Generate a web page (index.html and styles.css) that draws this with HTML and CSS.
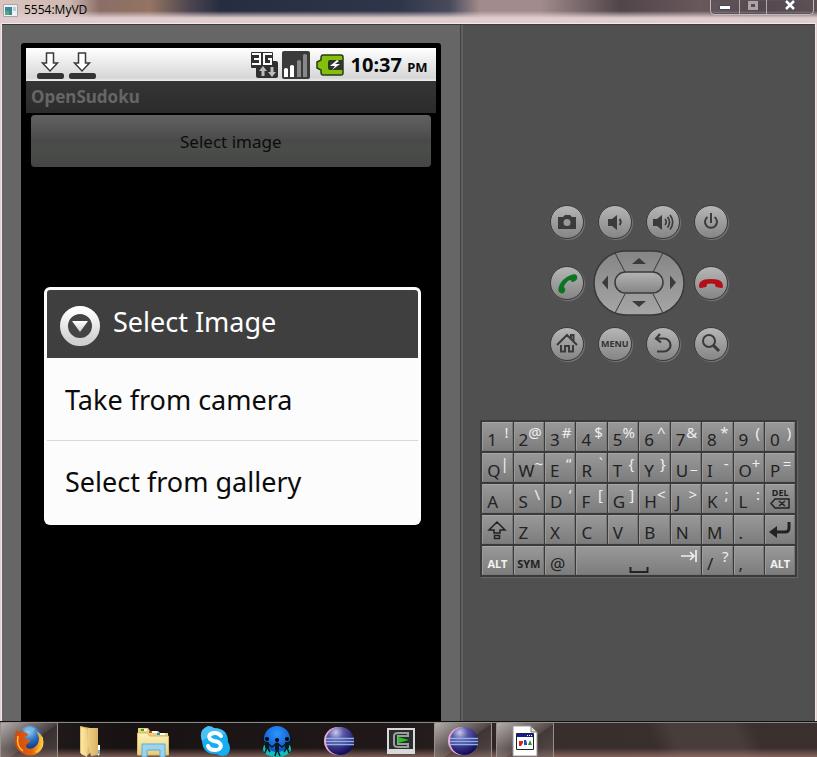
FILE: index.html
```html
<!DOCTYPE html>
<html lang="en">
<head>
<meta charset="utf-8">
<title>5554:MyVD</title>
<link rel="stylesheet" href="styles.css">
</head>
<body>
<svg class="defs" width="0" height="0" aria-hidden="true">
  <defs>
    <linearGradient id="pad" x1="0" y1="0" x2="0" y2="1"><stop offset="0" stop-color="#858585"/><stop offset="1" stop-color="#a6a6a6"/></linearGradient>
    <linearGradient id="center" x1="0" y1="0" x2="0" y2="1"><stop offset="0" stop-color="#b4b4b4"/><stop offset="1" stop-color="#858585"/></linearGradient>
    <linearGradient id="ring" x1="0" y1="0" x2="0" y2="1"><stop offset="0" stop-color="#fff"/><stop offset="1" stop-color="#cfcfcf"/></linearGradient>
    <linearGradient id="folder" x1="0" y1="0" x2="1" y2="0"><stop offset="0" stop-color="#fbe7a3"/><stop offset="1" stop-color="#d9b263"/></linearGradient>
    <linearGradient id="files" x1="0" y1="0" x2="0" y2="1"><stop offset="0" stop-color="#fdf3bd"/><stop offset="1" stop-color="#e8cd78"/></linearGradient>
    <linearGradient id="fox" x1="0" y1="0" x2="1" y2="0"><stop offset="0" stop-color="#d2460f"/><stop offset=".6" stop-color="#e0650f"/><stop offset="1" stop-color="#ffd34a"/></linearGradient>
    <radialGradient id="globe" cx=".45" cy=".2" r=".8"><stop offset="0" stop-color="#9fd8f5"/><stop offset=".45" stop-color="#2b72c0"/><stop offset="1" stop-color="#0b1f66"/></radialGradient>
    <radialGradient id="eclipse" cx=".35" cy=".2" r=".8"><stop offset="0" stop-color="#c9c9ee"/><stop offset=".35" stop-color="#5b58a8"/><stop offset="1" stop-color="#120b5c"/></radialGradient>
    <radialGradient id="world" cx=".5" cy=".3" r=".7"><stop offset="0" stop-color="#2f95ff"/><stop offset="1" stop-color="#0950c4"/></radialGradient>
  </defs>
</svg>

<header class="titlebar">
  <svg class="app-icon" width="15" height="13" viewBox="0 0 15 13"><path fill="#eef1f2" stroke="#a8a6a8" d="M.5.5h14v12H.5z"/><path fill="#3c8793" d="M2 3h7v8H2z"/><path fill="#57a87d" d="M2 7h4v4H2z"/><path fill="#b8cfe0" d="M10 3h3v4h-3z"/></svg>
  <h1 class="window-title">5554:MyVD</h1>
  <div class="window-buttons">
    <button class="wb wb-min" aria-label="Minimize"><svg width="12" height="5" viewBox="0 0 12 5"><path fill="#fff" stroke="#4b4a60" d="M.5.5h11v4H.5z"/></svg></button>
    <button class="wb wb-max" aria-label="Maximize"><svg width="10" height="9" viewBox="0 0 10 9"><path fill="none" stroke="#aaa4a8" stroke-width="3" d="M1.500 1.500h7v6h-7z"/></svg></button>
    <button class="wb wb-close" aria-label="Close"><svg width="12" height="11" viewBox="0 0 12 11"><path stroke="#4b4a60" stroke-width="4" d="m2 1 8 8M10 1 2 9"/><path stroke="#fff" stroke-width="2.500" d="m2 1 8 8M10 1 2 9"/></svg></button>
  </div>
</header>

<main class="emulator">
  <section class="device">
    <div class="bezel">
      <div class="status">
        <svg width="28" height="30" viewBox="0 0 28 30"><path fill="#fff" stroke="#3a3a3a" stroke-width="1.500" d="M10.500 3h7v10h4L14 21l-7.500-8h4z"/><rect x="1" y="23" width="27" height="6" rx="2.500" fill="#333"/></svg>
        <svg width="28" height="30" viewBox="0 0 28 30"><path fill="#fff" stroke="#3a3a3a" stroke-width="1.500" d="M10.500 3h7v10h4L14 21l-7.500-8h4z"/><rect x="1" y="23" width="27" height="6" rx="2.500" fill="#333"/></svg>
        <span class="grow"></span>
        <svg width="28" height="28" viewBox="0 0 28 28"><path fill="#303030" d="M2 1h20q1 0 1 1v8h3q2 0 2 2v13q0 2-2 2H8q-2 0-2-2v-8H2q-1 0-1-1V2q0-1 1-1z"/><path fill="none" stroke="#fff" stroke-width="2" d="M2 3h8v10H2M4 8h6M22 3h-8v10h7V8h-3"/><path fill="#bbb" d="m13 15 4 5h-2.500v5h-3v-5H9zM22 26l4-5h-2.500v-5h-3v5H18z"/></svg>
        <svg width="28" height="28" viewBox="0 0 28 28"><rect width="28" height="28" rx="2" fill="#3a3a3a"/><path fill="#fff" d="M2 18q2-2 4 0v8H2zM8 15q2-2 4 0v11H8z"/><path fill="#888" d="M15 10q2-2 4 0v16h-4zM21 4q2-2 4 0v22h-4z"/></svg>
        <svg class="battery" width="28" height="22" viewBox="0 0 28 22"><path fill="#83c00c" stroke="#2d3a18" stroke-width="1.500" d="M7 1h18q2 0 2 2v16q0 2-2 2H7q-2 0-2-3v-2l-4-2V8l4-2V4q0-3 2-3z"/><path fill="#2f352a" d="M14 6h13v10H14q-2 0-2-2V8q0-2 2-2z"/><path fill="#fff" d="m21 6-7 6 5 0-3 4 8-6h-5l4-3z"/></svg>
        <span class="clock">10:37 <small>PM</small></span>
      </div>
      <h2 class="app-title">OpenSudoku</h2>
      <button class="select-image">Select image</button>
      <div class="dialog" role="dialog" aria-labelledby="dialog-title">
        <div class="dialog-head">
          <svg width="40" height="40" viewBox="0 0 40 40"><circle cx="20" cy="20" r="16" fill="#444" stroke="url(#ring)" stroke-width="8"/><path fill="url(#ring)" d="M12 15h16l-8 11z"/></svg>
          <h3 id="dialog-title">Select Image</h3>
        </div>
        <button class="option">Take from camera</button>
        <button class="option">Select from gallery</button>
      </div>
    </div>
  </section>

  <section class="controls">
    <div class="pad">
      <button class="round" aria-label="Camera"><svg width="32" height="32" viewBox="0 0 32 32"><path fill="#3b3b3b" d="M7 11h5l2-2h5l2 2h4v12H7z"/><circle cx="16" cy="16.500" r="3.500" fill="#999"/></svg></button>
      <button class="round" aria-label="Volume down"><svg width="32" height="32" viewBox="0 0 32 32"><path fill="#3b3b3b" d="M9 13h4l5-4v15l-5-4H9z"/><path fill="none" stroke="#3b3b3b" stroke-width="2" d="M20.500 13q2.500 3 0 6"/></svg></button>
      <button class="round" aria-label="Volume up"><svg width="32" height="32" viewBox="0 0 32 32"><path fill="#3b3b3b" d="M6 13h4l5-4v15l-5-4H6z"/><path fill="none" stroke="#3b3b3b" stroke-width="1.700" d="M18 13q2.500 3 0 6M20.500 11q4 5 0 10.500M23 9q5.500 7 0 14.500"/></svg></button>
      <button class="round" aria-label="Power"><svg width="32" height="32" viewBox="0 0 32 32"><path fill="none" stroke="#3b3b3b" stroke-width="2" d="M12.500 11a6 6 0 1 0 7 0M16 7v10"/></svg></button>
      <button class="round" aria-label="Call"><svg width="32" height="32" viewBox="0 0 32 32"><path fill="#08751f" d="M8 25c-2-3 1-13 12-17 3-1 5-1 6 1 1 3-1 5-4 6-2 0-2-2-3-2-3 1-6 5-6 7 0 1 2 1 1 4-1 3-4 3-6 1z"/></svg></button>
      <div class="dpad">
        <svg width="92" height="66" viewBox="0 0 92 66"><rect x="1" y="1" width="90" height="64" rx="32" fill="url(#pad)" stroke="#393939" stroke-width="1.500"/><path fill="none" stroke="#393939" d="M22 3l10 19M70 3 60 22M22 63l10-19M70 63 60 44"/><rect x="22" y="22" width="48" height="21" rx="10.500" fill="url(#center)" stroke="#3b3b3b" stroke-width="1.500"/><path fill="#3b3b3b" d="m46 8 7 6H39zM46 57l7-6H39zM9 32.500l6-7v14zM83 32.500l-6-7v14z"/></svg>
      </div>
      <button class="round" aria-label="End call"><svg width="32" height="32" viewBox="0 0 32 32"><path fill="#b30f18" d="M4 20c0-5 2-8 12-8s12 3 12 8q0 1-2 1l-5-1q-1-1-1-3-4-1-8 0 0 2-1 3l-5 1q-2 0-2-1z"/></svg></button>
      <button class="round" aria-label="Home"><svg width="32" height="32" viewBox="0 0 32 32"><path fill="none" stroke="#3b3b3b" stroke-width="2" d="m6 17 10-10 10 10M20 10V7h2.500v6M10 17v6.500h4V18h4v5.500h4V17"/></svg></button>
      <button class="round menu">MENU</button>
      <button class="round" aria-label="Back"><svg width="32" height="32" viewBox="0 0 32 32"><path fill="none" stroke="#3b3b3b" stroke-width="2.200" d="M13 6 9 10.500l5 4M9 10.500h8a6.500 6.500 0 0 1 0 13h-7"/></svg></button>
      <button class="round" aria-label="Search"><svg width="32" height="32" viewBox="0 0 32 32"><circle cx="14" cy="13" r="6" fill="none" stroke="#3b3b3b" stroke-width="2"/><path stroke="#3b3b3b" stroke-width="3" d="m18 17 6 6"/></svg></button>
    </div>

    <div class="keyboard">
      <button class="key">1<sup>!</sup></button><button class="key">2<sup>@</sup></button><button class="key">3<sup>#</sup></button><button class="key">4<sup>$</sup></button><button class="key">5<sup>%</sup></button><button class="key">6<sup>^</sup></button><button class="key">7<sup>&amp;</sup></button><button class="key">8<sup>*</sup></button><button class="key">9<sup>(</sup></button><button class="key">0<sup>)</sup></button>
      <button class="key">Q<sup>|</sup></button><button class="key">W<sup>~</sup></button><button class="key">E<sup>“</sup></button><button class="key">R<sup>`</sup></button><button class="key">T<sup>{</sup></button><button class="key">Y<sup>}</sup></button><button class="key">U<sup>_</sup></button><button class="key">I<sup>-</sup></button><button class="key">O<sup>+</sup></button><button class="key">P<sup>=</sup></button>
      <button class="key">A</button><button class="key">S<sup>\</sup></button><button class="key">D<sup>‘</sup></button><button class="key">F<sup>[</sup></button><button class="key">G<sup>]</sup></button><button class="key">H<sup>&lt;</sup></button><button class="key">J<sup>&gt;</sup></button><button class="key">K<sup>;</sup></button><button class="key">L<sup>:</sup></button>
      <button class="key del">DEL<svg width="20" height="11" viewBox="0 0 20 11"><path fill="none" stroke="#222" stroke-width="1.500" d="M1 5.500 5 1h14v9H5zM9 3l6 5M15 3 9 8"/></svg></button>
      <button class="key icon" aria-label="Shift"><svg width="20" height="20" viewBox="0 0 20 20"><path fill="none" stroke="#222" stroke-width="1.500" d="m10 2 8 8h-5v3H7v-3H2zM7.500 15.500h5v3h-5z"/></svg></button>
      <button class="key">Z</button><button class="key">X</button><button class="key">C</button><button class="key">V</button><button class="key">B</button><button class="key">N</button><button class="key">M</button><button class="key">.</button>
      <button class="key icon" aria-label="Enter"><svg width="24" height="18" viewBox="0 0 24 18"><path fill="none" stroke="#222" stroke-width="3" d="M21 1v6q0 4-4 4H8"/><path fill="#222" d="M1 11 9 5v12z"/></svg></button>
      <button class="key word light">ALT</button><button class="key word">SYM</button><button class="key">@</button>
      <button class="key space" aria-label="Space"><svg width="20" height="7" viewBox="0 0 20 7"><path fill="none" stroke="#222" stroke-width="2" d="M1.500 0v5h17V0"/></svg><svg class="tab" width="16" height="12" viewBox="0 0 16 12"><path fill="none" stroke="#eee" stroke-width="1.700" d="M0 6h13M9 2l4 4-4 4M15 0v12"/></svg></button>
      <button class="key">/<sup>?</sup></button><button class="key">,</button><button class="key word light">ALT</button>
    </div>
  </section>
</main>

<nav class="taskbar" aria-label="Taskbar">
  <button class="task active" aria-label="Firefox"><svg width="32" height="32" viewBox="0 0 32 32"><circle cx="17" cy="14" r="13" fill="url(#globe)"/><path fill="#75b9e4" d="M14 4q4-3 8 0l-3 3-4-1z"/><path fill="url(#fox)" d="M3 5q2 1 4 3l2-4q1 3 4 4 2 0 2 2l-3 2 1 2q3 0 5 2-2 1-4 3-2 2 0 4 5 2 9-2 3-3 3-8-1-4-3-7 5 2 7 8 2 9-5 14-8 5-16 0Q1 23 2 15q0-6 1-10z"/><path fill="none" stroke="#ffc637" stroke-width="1.500" d="M29 12q2 10-6 15M5 11q-2 10 5 15"/></svg></button>
  <button class="task" aria-label="Folder"><svg width="32" height="32" viewBox="0 0 32 32"><path fill="#e2bc65" d="M5 1l10 2v25l-3 3-7-3z"/><path fill="url(#folder)" d="M13 3h10v27l-7 1-3-11-1 12-6-3V2l6 2v14z"/><path fill="#fff" d="M23 20h2v9l-2 2z"/><path fill="#69b0d8" d="M23 25h2v4h-2z"/></svg></button>
  <button class="task" aria-label="Windows Explorer"><svg width="34" height="32" viewBox="0 0 34 32"><path fill="#e9d07d" d="M2 3h10l2 3h8l2 2h8v22H2z"/><path fill="#fff" d="M5 4h6v2H5zM13 6h8v2h-8zM21 8h8v2h-8z"/><path fill="#25ab2d" d="M5 4h3v2H5z"/><path fill="#dc3e25" d="M13 6h3v2h-3z"/><path fill="#258de0" d="M21 8h3v2h-3z"/><path fill="url(#files)" stroke="#d8b965" d="M1.500 8h10l2 3h19v19h-31z"/><path fill="#9cd4ee" stroke="#5dacd5" d="M6 32V19h23v13h-5v-7H11v7z"/></svg></button>
  <button class="task" aria-label="Skype"><svg width="32" height="32" viewBox="0 0 32 32"><path fill="#15aef0" d="M9 1q4 0 6 2 14 0 14 14 2 3 2 6 0 7-7 8-4 0-6-2Q4 30 3 16-1 5 9 1z"/><path fill="#7fd3f8" opacity=".5" d="M9 1q4 0 6 2 8 0 12 6Q13 8 3 16-1 5 9 1z"/><path fill="none" stroke="#fff" stroke-width="4" stroke-linecap="round" d="M22 11q-2-3-6-3c-7 0-8 6-1 8 9 1 9 9 1 9-4 0-6-1-7-4"/></svg></button>
  <button class="task" aria-label="Community"><svg width="32" height="32" viewBox="0 0 32 32"><ellipse cx="16" cy="24" rx="14" ry="8" fill="#12bfbb"/><circle cx="16" cy="14" r="13" fill="url(#world)"/><path stroke="#061a22" stroke-width="1.500" fill="none" d="M1 11v5l5 2 5 4 5-4 5 4 5-4 5-2v-5M6 22l-2 6M6 22l3 5M26 22l-3 5M26 22l2 6M16 24l-2 7M16 24l3 7"/><path stroke="#061a22" stroke-width="4" d="M6 17v6M16 18v7M26 17v6"/><circle cx="6" cy="14" r="2"/><circle cx="16" cy="15" r="2"/><circle cx="26" cy="14" r="2"/></svg></button>
  <button class="task" aria-label="Eclipse"><svg width="32" height="32" viewBox="0 0 32 32"><circle cx="15" cy="16" r="14" fill="#efa9d8"/><circle cx="17" cy="16" r="14" fill="url(#eclipse)"/><path stroke="#8fb2e2" stroke-width="1.300" d="M3 13.500h28M3 16.500h28M3 19.500h28"/></svg></button>
  <button class="task" aria-label="Console"><svg width="30" height="30" viewBox="0 0 30 30"><path fill="#d8dada" d="M1 3h28v26H1z"/><path fill="#292d2c" d="M3 5h24v19H3z"/><path fill="none" stroke="#9a9f9e" stroke-width="2" d="M22 8H12q-4 0-4 3v8q0 3 4 3h10v-3H12v-8h10z"/><path fill="#20c61e" d="m12 12 11 3-11 3z"/></svg></button>
  <button class="task active" aria-label="Eclipse workspace"><svg width="32" height="32" viewBox="0 0 32 32"><circle cx="15" cy="16" r="14" fill="#efa9d8"/><circle cx="17" cy="16" r="14" fill="url(#eclipse)"/><path stroke="#8fb2e2" stroke-width="1.300" d="M3 13.500h28M3 16.500h28M3 19.500h28"/></svg></button>
  <button class="task active" aria-label="Emulator"><svg width="26" height="32" viewBox="0 0 26 32"><path fill="#fff" stroke="#999" d="M1 1h18l6 6v24H1z"/><path fill="#ddd" stroke="#777" d="M19 1v6h6z"/><path fill="#fff" stroke="#222" d="M4.500 8.500h17v16h-17z"/><path fill="#141d96" d="M5 9h16v3H5z"/><path fill="#fff" d="M15 10h1v1h-1zM17 10h1v1h-1zM19 10h1v1h-1z"/><path fill="#d52525" d="M7 16h4v2l-2 3H7z"/><path fill="#244bc5" d="M12 15h2l1 3v2h-3z"/><path fill="#26913b" d="m18 15 2 5h-4z"/></svg></button>
</nav>
</body>
</html>
```
FILE: styles.css
```css
* { box-sizing: border-box; }
.defs { position: absolute; }
body {
  margin: 0;
  height: 100vh;
  display: flex;
  flex-direction: column;
  overflow: hidden;
  background: #e3d1d2;
  font-family: "Noto Sans", "Open Sans", sans-serif;
}
h1, h2, h3 { margin: 0; font-weight: 400; }
button { margin: 0; padding: 0; border: 0; font-family: inherit; color: inherit; background: none; }
svg { display: block; flex: none; }

/* Window frame */
.titlebar {
  flex: none;
  height: 24px;
  display: flex;
  align-items: flex-start;
  padding: 0 3px;
  background:
    linear-gradient(transparent 11px, #dfcdd0 18px),
    linear-gradient(90deg, #d9c4bf 0, #cdb8b2 70px, #8a6e66 100px, #947462 150px, #4c4550 190px, #272d40 220px, #30364a 400px, #494b5c 450px, #a28c8b 480px, #a28c8b 540px, #50454a 620px, #69585c 700px, #53494f 760px, #5e5053 100%);
}
.app-icon { margin-top: 4px; }
.window-title { margin-left: 6px; font: 12px/19px "Open Sans", sans-serif; color: #000; }
.window-buttons {
  display: flex;
  margin-left: auto;
  height: 15px;
  border: 1px solid #c3b8bb;
  border-top: 0;
  border-radius: 0 0 5px 5px;
  box-shadow: inset 0 0 0 1px #5a5256;
}
.wb { display: flex; justify-content: center; align-items: flex-start; width: 27px; }
.wb + .wb { border-left: 1px solid #b3a9ac; }
.wb-min { width: 28px; }
.wb-min svg { margin-top: 5px; }
.wb-max svg { margin-top: 1px; }
.wb-close { width: 47px; }

/* Emulator */
.emulator {
  flex: 1;
  min-height: 0;
  display: flex;
  margin: 0 2px;
  border-top: 1px solid #3c3c3c;
  box-shadow: 0 0 0 1px #f5e8e6;
  overflow: hidden;
}
.device {
  flex: none;
  width: 56.4%;
  display: flex;
  padding: 18px 19px 0;
  background: #666;
  border-right: 1px solid #3f3f3f;
}
.bezel {
  flex: 1;
  display: flex;
  flex-direction: column;
  padding: 5px 5px 0;
  background: #000;
  border-radius: 3px 3px 0 0;
}
.status {
  flex: none;
  display: flex;
  align-items: center;
  gap: 4px;
  height: 33px;
  padding: 0 8px 0 10px;
  background: linear-gradient(#fff, #d6d6d6 30px, #eee);
}
.grow { flex: 1; }
.battery { margin-left: 2px; }
.clock { margin-left: 3px; font-size: 20px; font-weight: 700; color: #0a0a0a; white-space: nowrap; }
.clock small { font-size: 13px; }
.app-title {
  flex: none;
  padding-left: 5px;
  font-size: 17px;
  font-weight: 700;
  line-height: 32px;
  color: #666;
  background: linear-gradient(#353535, #2a2b2a);
}
.select-image {
  flex: none;
  height: 52px;
  margin: 2px 5px 0;
  border-radius: 4px;
  font-size: 17px;
  color: #0c0c0c;
  background: linear-gradient(#616361, #494949 50%, #4b4d4b 65%, #444644);
}
.dialog {
  flex: none;
  margin: 120px 15px 0 18px;
  padding: 3px;
  border-radius: 6px;
  background: #fcfcfc;
}
.dialog-head {
  display: flex;
  align-items: center;
  gap: 13px;
  height: 68px;
  padding: 4px 13px 0;
  border-radius: 3px 3px 0 0;
  color: #fff;
  background: #3f3f3f;
}
.dialog-head h3 { font-size: 27px; line-height: 40px; padding-bottom: 8px; }
.option {
  display: block;
  width: 100%;
  height: 82px;
  padding: 0 18px;
  text-align: left;
  font-size: 27px;
  color: #0b0b0b;
}
.option + .option { border-top: 1px solid #d8d8d8; }

/* Hardware controls */
.controls {
  flex: 1;
  min-width: 0;
  display: flex;
  flex-direction: column;
  align-items: center;
  padding-top: 166px;
  background: #505050;
  border-left: 2px solid #606060;
}
.pad { display: grid; grid-template: repeat(3, 61px) / repeat(4, 48px); place-items: center; }
.round {
  display: grid;
  place-items: center;
  width: 34px;
  height: 34px;
  border: 1px solid #3d3d3d;
  border-radius: 50%;
  background: linear-gradient(#b6b6b6, #858585);
  box-shadow: 1px 1px 1px #777;
}
.menu { font-size: 9px; font-weight: 700; color: #333; }
.dpad { grid-column: span 2; }
.keyboard {
  display: grid;
  grid-template: repeat(5, 29px) / repeat(10, 1fr);
  gap: 2px 1px;
  width: 90%;
  max-width: 640px;
  margin-top: 46px;
  padding: 1px;
  border: 1px solid #3a3a3a;
  background: #3a3a3a;
  box-shadow: 1px 1px 1px #666;
}
.key {
  display: flex;
  justify-content: space-between;
  align-items: flex-end;
  min-width: 0;
  padding: 0 3px 0 4px;
  border: 1px solid #9b9b9b;
  border-color: #a6a6a6 #777 #777 #9b9b9b;
  font-size: 17px;
  line-height: 20px;
  color: #222;
  background: linear-gradient(#989898, #7d7d7d);
}
.key sup { align-self: flex-start; font-size: 15px; line-height: 18px; color: #eee; }
.key.word { justify-content: center; padding: 0; font-size: 11px; font-weight: 700; }
.key.light { color: #f2f2f2; }
.key.icon { justify-content: center; align-items: center; padding: 0; }
.key.del { flex-direction: column; justify-content: center; align-items: center; padding: 0; font-size: 9px; line-height: 10px; font-weight: 700; }
.key.space { grid-column: span 4; display: grid; grid-template-columns: 1fr auto 1fr; }
.space svg { grid-column: 2; align-self: end; }
.space .tab { grid-column: 3; grid-row: 1; align-self: start; justify-self: end; margin-top: 3px; }

/* Taskbar */
.taskbar {
  flex: none;
  display: flex;
  gap: 4px;
  height: 36px;
  border-top: 1px solid #111;
  box-shadow: inset 0 1px #8a8585;
  background:
    linear-gradient(transparent 26px, #9c756c 38px),
    linear-gradient(70deg, transparent 620px, #483d3b 640px, #483d3b 700px, transparent 720px),
    linear-gradient(90deg, #281f20, #181212 120px, #211919 400px, #382e2c 560px, #3b302e);
}
.task { flex: none; width: 58px; padding-top: 3px; display: flex; justify-content: center; align-items: flex-start; overflow: hidden; }
.active {
  border: 1px solid #99908d;
  border-bottom: 0;
  border-radius: 2px 2px 0 0;
  padding-top: 2px;
  background: linear-gradient(145deg, #b3adab, #71686580 55%, #51454580 56%, #75676480);
}
```
